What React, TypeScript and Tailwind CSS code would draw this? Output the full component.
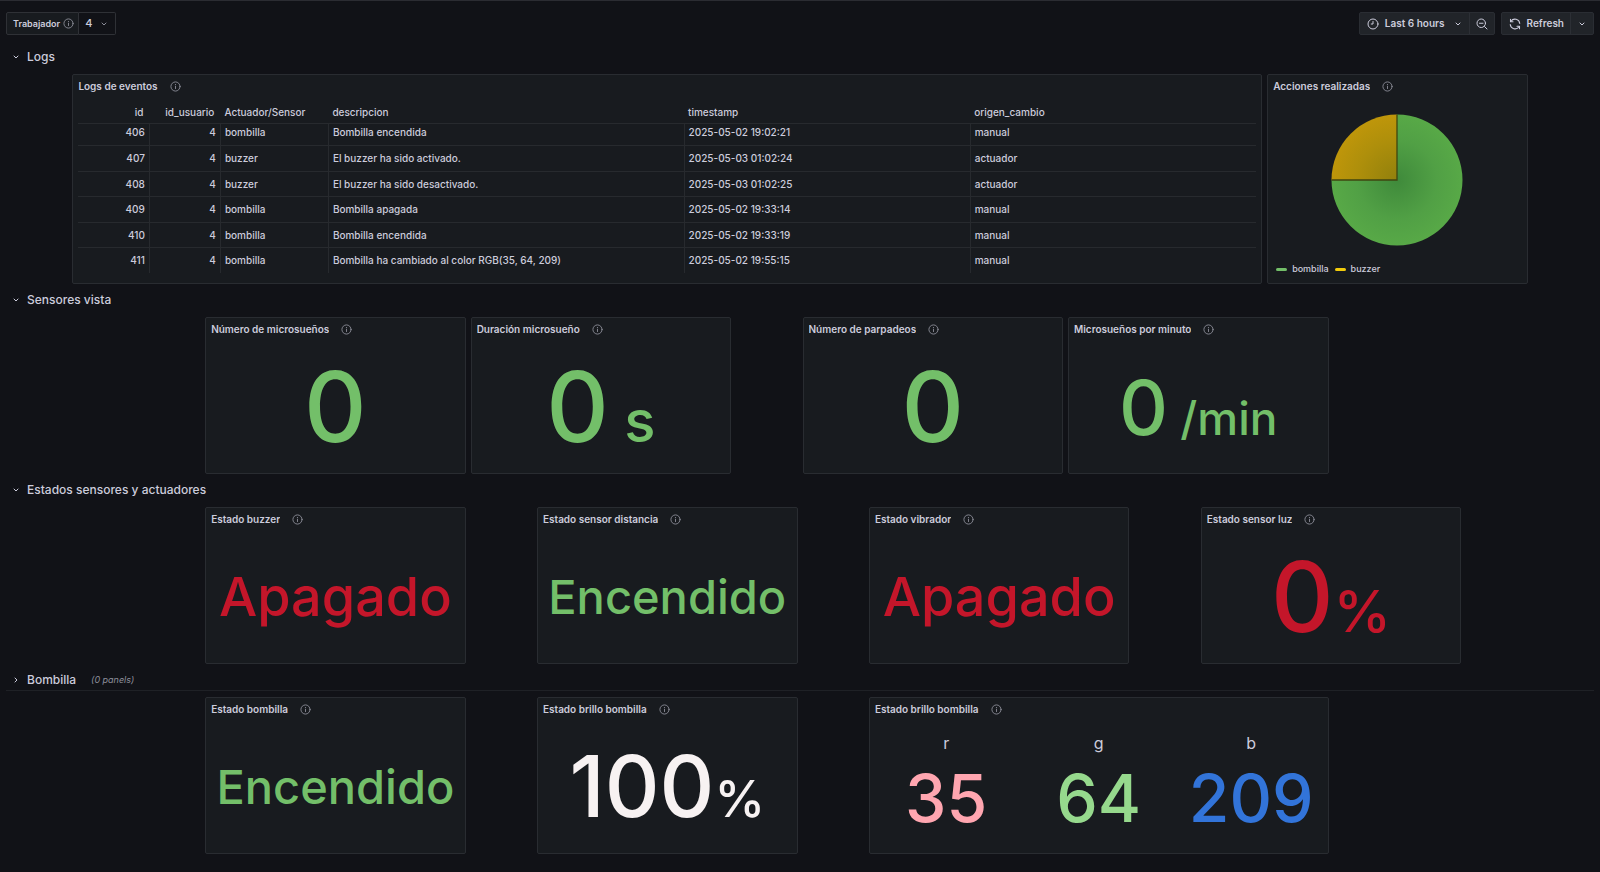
import type { ReactNode } from 'react';
import clsx from 'clsx';
import { ChevronDown, ChevronRight } from 'lucide-react';

const rows = [
  { id: 406, user: 4, source: 'bombilla', text: 'Bombilla encendida', time: '2025-05-02 19:02:21', origin: 'manual' },
  { id: 407, user: 4, source: 'buzzer', text: 'El buzzer ha sido activado.', time: '2025-05-03 01:02:24', origin: 'actuador' },
  { id: 408, user: 4, source: 'buzzer', text: 'El buzzer ha sido desactivado.', time: '2025-05-03 01:02:25', origin: 'actuador' },
  { id: 409, user: 4, source: 'bombilla', text: 'Bombilla apagada', time: '2025-05-02 19:33:14', origin: 'manual' },
  { id: 410, user: 4, source: 'bombilla', text: 'Bombilla encendida', time: '2025-05-02 19:33:19', origin: 'manual' },
  { id: 411, user: 4, source: 'bombilla', text: 'Bombilla ha cambiado al color RGB(35, 64, 209)', time: '2025-05-02 19:55:15', origin: 'manual' },
];

function InfoIcon() {
  return (
    <svg viewBox="0 0 24 24" className="size-[11px] shrink-0 text-[#8b8c97]" fill="none" stroke="currentColor" strokeWidth="2" strokeLinecap="round" aria-hidden="true">
      <circle cx="12" cy="12" r="10" />
      <path d="M12 11.5v5" />
      <path d="M12 7.6v.1" strokeWidth="2.6" />
    </svg>
  );
}

function ClockIcon() {
  return (
    <svg viewBox="0 0 24 24" className="size-3 shrink-0" fill="none" stroke="currentColor" strokeWidth="2" strokeLinecap="round" strokeLinejoin="round" aria-hidden="true">
      <circle cx="12" cy="12" r="10" />
      <path d="M12 7v5H8.5" />
    </svg>
  );
}

function ZoomOutIcon() {
  return (
    <svg viewBox="0 0 24 24" className="size-3 shrink-0" fill="none" stroke="currentColor" strokeWidth="2" strokeLinecap="round" aria-hidden="true">
      <circle cx="10.5" cy="10.5" r="8.5" />
      <path d="M7 10.5h7M17 17l5 5" />
    </svg>
  );
}

function SyncIcon() {
  return (
    <svg viewBox="0 0 24 24" className="size-3 shrink-0" fill="none" stroke="currentColor" strokeWidth="2.2" strokeLinecap="round" strokeLinejoin="round" aria-hidden="true">
      <path d="M21.5 11A9.6 9.6 0 0 0 4 6.6" />
      <path d="M3 2.5v5h5" />
      <path d="M2.5 13A9.6 9.6 0 0 0 20 17.4" />
      <path d="M21 21.5v-5h-5" />
    </svg>
  );
}

function Panel({ title, className, children }: { title: string; className: string; children: ReactNode }) {
  return (
    <section className={clsx('flex min-w-0 flex-col rounded-[2px] border border-[#292c31] bg-[#181b1f]', className)}>
      <header className="flex h-[22px] shrink-0 items-center gap-3 px-[5px]">
        <h2 className="truncate text-[10px] font-semibold">{title}</h2>
        <InfoIcon />
      </header>
      {children}
    </section>
  );
}

function Stat({ value, unit, spaced, size, unitSize, color }: { value: string; unit?: string; spaced?: boolean; size: string; unitSize?: string; color: string }) {
  return (
    <div className={clsx('flex flex-1 items-center justify-center', color)}>
      <p className="flex items-baseline leading-none font-medium whitespace-pre">
        <span className={size}>{value}</span>
        {unit && (
          <span className={unitSize}>
            {spaced ? ' ' : ''}
            {unit}
          </span>
        )}
      </p>
    </div>
  );
}

function SectionHeader({ title, note, collapsed }: { title: string; note?: string; collapsed?: boolean }) {
  const Chevron = collapsed ? ChevronRight : ChevronDown;
  return (
    <div className={clsx('flex h-[21px] items-center border-b', collapsed ? 'border-[#1f2126]' : 'border-transparent')}>
      <button type="button" aria-expanded={!collapsed} className="flex items-center gap-[7px] pl-1.5">
        <Chevron className="size-2" strokeWidth={3} aria-hidden="true" />
        <span className="text-[12px] font-medium">{title}</span>
      </button>
      {note && <span className="pl-[15px] text-[9px] text-[#8e8f9b] italic">{note}</span>}
    </div>
  );
}

function EventsTable() {
  return (
    <div className="overflow-x-auto px-[5px]">
      <table className="w-full table-fixed border-collapse text-left text-[10px] leading-4 font-medium">
        <colgroup>
          <col className="w-[71px]" />
          <col className="w-[71px]" />
          <col className="w-[108px]" />
          <col className="w-[30.2%]" />
          <col className="w-[24.3%]" />
          <col />
        </colgroup>
        <thead>
          <tr className="h-[26px] border-b border-[#272a2e] [&>th]:px-1 [&>th]:pt-1 [&>th]:pb-0 [&>th]:font-medium">
            <th className="text-right"><span className="pr-0.5">id</span></th>
            <th className="text-right"><span className="pr-0.5">id_usuario</span></th>
            <th>Actuador/Sensor</th>
            <th>descripcion</th>
            <th>timestamp</th>
            <th>origen_cambio</th>
          </tr>
        </thead>
        <tbody>
          {rows.map((r, i) => (
            <tr
              key={r.id}
              className={clsx(
                '[&>td]:border-r [&>td]:border-[#272a2e] [&>td]:px-1 [&>td:last-child]:border-r-0',
                i === 0 ? 'h-[22px] [&>td]:pt-0 [&>td]:pb-1' : 'odd:h-[25px] even:h-[26px] [&>td]:py-0',
                i < rows.length - 1 && 'border-b border-[#272a2e]',
              )}
            >
              <td className="text-right">{r.id}</td>
              <td className="text-right">{r.user}</td>
              <td>{r.source}</td>
              <td className="truncate">{r.text}</td>
              <td>{r.time}</td>
              <td>{r.origin}</td>
            </tr>
          ))}
        </tbody>
      </table>
    </div>
  );
}

function ActionsPie() {
  return (
    <div className="flex flex-1 flex-col">
      <div className="flex flex-1 items-center justify-center">
        <svg viewBox="0 0 132 132" className="size-[132px]" role="img" aria-label="bombilla 75%, buzzer 25%">
          <defs>
            <radialGradient id="pie-green" gradientUnits="userSpaceOnUse" cx="66" cy="66" r="66">
              <stop offset="0" stopColor="#3f8a3b" />
              <stop offset="0.6" stopColor="#51a045" />
              <stop offset="1" stopColor="#58a947" />
            </radialGradient>
            <radialGradient id="pie-yellow" gradientUnits="userSpaceOnUse" cx="66" cy="66" r="66">
              <stop offset="0" stopColor="#91800c" />
              <stop offset="0.6" stopColor="#ae8f0b" />
              <stop offset="1" stopColor="#bf960a" />
            </radialGradient>
          </defs>
          <path d="M66 66V.5A65.5 65.5 0 1 1 .5 66Z" fill="url(#pie-green)" />
          <path d="M66 66H.5A65.5 65.5 0 0 1 66 .5Z" fill="url(#pie-yellow)" />
          <path d="M66 .5V66H.5" fill="none" stroke="#3f4510" strokeWidth="1.3" />
        </svg>
      </div>
      <ul className="flex items-center gap-1.5 px-2 pb-[7px] text-[9px] leading-[14px] font-medium">
        <li className="flex items-center gap-[5px]">
          <span className="h-[3px] w-[11px] rounded-full bg-[#73bf69]" />
          bombilla
        </li>
        <li className="flex items-center gap-[5px]">
          <span className="h-[3px] w-[11px] rounded-full bg-[#f2cc0c]" />
          buzzer
        </li>
      </ul>
    </div>
  );
}

function Toolbar() {
  return (
    <div className="flex h-[23px] items-stretch justify-between text-[10px] font-semibold">
      <div className="flex items-stretch">
        <label htmlFor="worker" className="flex items-center gap-[3px] rounded-l-[2px] border border-[#2f3136] bg-[#181b1f] pr-1 pl-1.5 text-[9px]">
          Trabajador
          <InfoIcon />
        </label>
        <div className="relative flex">
          <select id="worker" defaultValue="4" className="w-[37px] appearance-none rounded-r-[2px] border border-l-0 border-[#2f3136] bg-[#111217] pl-1.5 text-[11px] font-medium">
            <option value="4">4</option>
          </select>
          <ChevronDown className="pointer-events-none absolute top-2 right-2 size-2 text-[#8b8c97]" strokeWidth={3} aria-hidden="true" />
        </div>
      </div>
      <div className="flex items-stretch gap-1.5">
        <div className="flex items-stretch rounded-[2px] border border-[#2a2d33] bg-[#212429]">
          <button type="button" className="flex items-center gap-1.5 px-[7px]">
            <ClockIcon />
            Last 6 hours
            <ChevronDown className="ml-[3px] size-2" strokeWidth={3} aria-hidden="true" />
          </button>
          <button type="button" aria-label="Zoom out" className="flex items-center border-l border-[#2c2f35] px-1.5">
            <ZoomOutIcon />
          </button>
        </div>
        <div className="flex items-stretch rounded-[2px] border border-[#2a2d33] bg-[#212429]">
          <button type="button" className="flex items-center gap-1.5 pr-1.5 pl-[7px]">
            <SyncIcon />
            Refresh
          </button>
          <button type="button" aria-label="Refresh interval" className="flex items-center border-l border-[#2c2f35] px-[7px]">
            <ChevronDown className="size-2" strokeWidth={3} aria-hidden="true" />
          </button>
        </div>
      </div>
    </div>
  );
}

const channels = [
  { name: 'r', value: '35', color: 'text-[#ffa6b0]' },
  { name: 'g', value: '64', color: 'text-[#96d98d]' },
  { name: 'b', value: '209', color: 'text-[#3274d9]' },
];

const grid = 'grid grid-cols-24 gap-x-[5px]';

export default function App() {
  return (
    <main className="min-h-screen border-t border-[#2b2c32] bg-[#111217] px-1.5 pt-[11px] pb-4 font-['Inter',sans-serif] text-[#ccccdc]">
      <Toolbar />
      <div className="mt-3 flex flex-col gap-1.5">
        <SectionHeader title="Logs" />
        <div className={grid}>
          <Panel title="Logs de eventos" className="col-span-18 col-start-2 h-[210px]">
            <EventsTable />
          </Panel>
          <Panel title="Acciones realizadas" className="col-span-4 col-start-20 h-[210px]">
            <ActionsPie />
          </Panel>
        </div>

        <SectionHeader title="Sensores vista" />
        <div className={grid}>
          <Panel title="Número de microsueños" className="col-span-4 col-start-4 h-[157px]">
            <Stat value="0" size="text-[97px]" color="text-[#73bf69]" />
          </Panel>
          <Panel title="Duración microsueño" className="col-span-4 col-start-8 h-[157px]">
            <Stat value="0" unit="s" spaced size="text-[97px]" unitSize="text-[58px]" color="text-[#73bf69]" />
          </Panel>
          <Panel title="Número de parpadeos" className="col-span-4 col-start-13 h-[157px]">
            <Stat value="0" size="text-[97px]" color="text-[#73bf69]" />
          </Panel>
          <Panel title="Microsueños por minuto" className="col-span-4 col-start-17 h-[157px]">
            <Stat value="0" unit="/min" spaced size="text-[76px]" unitSize="text-[46px]" color="text-[#73bf69]" />
          </Panel>
        </div>

        <SectionHeader title="Estados sensores y actuadores" />
        <div className={grid}>
          <Panel title="Estado buzzer" className="col-span-4 col-start-4 h-[157px]">
            <Stat value="Apagado" size="text-[54px]" color="text-[#c4162a]" />
          </Panel>
          <Panel title="Estado sensor distancia" className="col-span-4 col-start-9 h-[157px]">
            <Stat value="Encendido" size="text-[47px]" color="text-[#73bf69]" />
          </Panel>
          <Panel title="Estado vibrador" className="col-span-4 col-start-14 h-[157px]">
            <Stat value="Apagado" size="text-[54px]" color="text-[#c4162a]" />
          </Panel>
          <Panel title="Estado sensor luz" className="col-span-4 col-start-19 h-[157px]">
            <Stat value="0" unit="%" size="text-[97px]" unitSize="text-[58px]" color="text-[#c4162a]" />
          </Panel>
        </div>

        <SectionHeader title="Bombilla" note="(0 panels)" collapsed />
        <div className={grid}>
          <Panel title="Estado bombilla" className="col-span-4 col-start-4 h-[157px]">
            <Stat value="Encendido" size="text-[47px]" color="text-[#73bf69]" />
          </Panel>
          <Panel title="Estado brillo bombilla" className="col-span-4 col-start-9 h-[157px]">
            <Stat value="100" unit="%" size="text-[85px]" unitSize="text-[51px]" color="text-[#f7f2f2]" />
          </Panel>
          <Panel title="Estado brillo bombilla" className="col-span-7 col-start-14 h-[157px]">
            <div className="grid flex-1 grid-cols-3 pb-2.5">
              {channels.map((c) => (
                <div key={c.name} className="flex flex-col items-center justify-center gap-3 leading-none">
                  <span className="text-[16px] leading-5">{c.name}</span>
                  <span className={clsx('text-[66px] font-medium', c.color)}>{c.value}</span>
                </div>
              ))}
            </div>
          </Panel>
        </div>
      </div>
    </main>
  );
}
